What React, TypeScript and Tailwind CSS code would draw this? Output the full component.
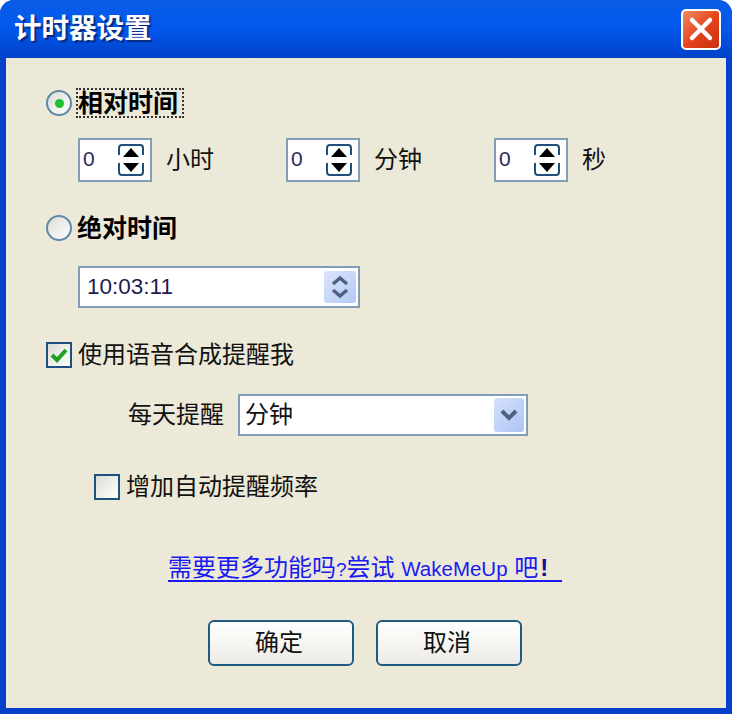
const cjk = "font-['Liberation_Sans','Noto_Sans_CJK_SC',sans-serif]";

function Radio({ checked }: { checked?: boolean }) {
  return (
    <span className="flex h-[26px] w-[26px] shrink-0 items-center justify-center rounded-full border-[2.5px] border-[#5d8aa8] bg-gradient-to-br from-[#dcdcd6] to-white">
      {checked && <span className="h-[9px] w-[9px] rounded-full bg-[#1fc22f]" />}
    </span>
  );
}

function Checkbox({ checked }: { checked?: boolean }) {
  return (
    <span className="flex h-[26px] w-[26px] shrink-0 items-center justify-center border-[2.5px] border-[#1c5180] bg-gradient-to-br from-[#dcdcd6] to-white">
      {checked && (
        <svg width="18" height="16" viewBox="0 0 18 16">
          <path d="M2 8 L7 13 L16 3" fill="none" stroke="#21a121" strokeWidth="4" />
        </svg>
      )}
    </span>
  );
}

function Spin({ label }: { label: string }) {
  return (
    <div className="flex w-[208px] items-center">
      <div className="flex h-[44px] w-[74px] items-center justify-between border-2 border-[#7f9db9] bg-white pl-[3px] pr-[5px]">
        <span className="pb-[3px] font-['Liberation_Sans',sans-serif] text-[21px] leading-none text-[#2b2b5a]">0</span>
        <svg width="28" height="34" viewBox="0 0 28 34">
          <path d="M2 12 V5 Q2 2 5 2 H23 Q26 2 26 5 V12" fill="none" stroke="#1f4f78" strokeWidth="2" />
          <path d="M2 20 V29 Q2 32 5 32 H23 Q26 32 26 29 V20" fill="none" stroke="#1f4f78" strokeWidth="2" />
          <path d="M14 5 L22 14 H6 Z" fill="#000" />
          <path d="M14 29 L22 20 H6 Z" fill="#000" />
        </svg>
      </div>
      <span className="ml-[14px] text-[24px] leading-none text-[#111]">{label}</span>
    </div>
  );
}

function XpButton({ label }: { label: string }) {
  return (
    <button className="h-[46px] w-[146px] rounded-[6px] border-[2.5px] border-[#1f5a80] bg-gradient-to-b from-white to-[#ecebe5] pr-[4px] text-[24px] leading-none text-[#111]">
      {label}
    </button>
  );
}

export default function App() {
  return (
    <div className={`${cjk} flex h-[714px] w-[732px] flex-col overflow-hidden rounded-t-[14px] bg-[#0440cc]`}>
      {/* title bar */}
      <div className="flex h-[58px] shrink-0 items-center justify-between bg-gradient-to-b from-[#0a5ee8] via-[#0256ec] to-[#0143c8] pl-[14px] pr-[11px]">
        <span className="text-[27.5px] font-bold leading-none text-white [text-shadow:2px_2px_1px_#0a2a80]">计时器设置</span>
        <span className="flex h-[41px] w-[40px] items-center justify-center rounded-[5px] border-2 border-white bg-gradient-to-br from-[#f08a60] via-[#e5441c] to-[#c8300c]">
          <svg width="26" height="26" viewBox="0 0 26 26">
            <path d="M4 4 L22 22 M22 4 L4 22" stroke="#fff" strokeWidth="4.5" strokeLinecap="round" />
          </svg>
        </span>
      </div>

      {/* body */}
      <div className="mx-[6px] mb-[6px] flex-1 bg-[#ece9d8] pl-[40px] pt-[30px]">
        <div className="flex h-[30px] items-center">
          <Radio checked />
          <span className="ml-[4px] border-2 border-dotted border-[#333] pr-[4px] text-[25px] font-bold leading-[26px] text-black">相对时间</span>
        </div>

        <div className="mt-[20px] flex pl-[32px]">
          <Spin label="小时" />
          <Spin label="分钟" />
          <Spin label="秒" />
        </div>

        <div className="mt-[33px] flex h-[26px] items-center">
          <Radio />
          <span className="ml-[5px] text-[25px] font-bold leading-none text-black">绝对时间</span>
        </div>

        <div className="ml-[32px] mt-[25px] flex h-[42px] w-[282px] items-center justify-between border-2 border-[#7f9db9] bg-white pl-[7px] pr-[2px]">
          <span className="text-[22.5px] leading-none text-[#1c1c50]">10:03:11</span>
          <span className="flex h-[32px] w-[32px] items-center justify-center rounded-[3px] bg-gradient-to-br from-[#dbe5fb] to-[#b4c9f5]">
            <svg width="20" height="26" viewBox="0 0 20 26">
              <path d="M3 10 L10 4 L17 10 M3 16 L10 22 L17 16" fill="none" stroke="#4d6185" strokeWidth="3.4" />
            </svg>
          </span>
        </div>

        <div className="mt-[34px] flex h-[26px] items-center">
          <Checkbox checked />
          <span className="ml-[6px] text-[24px] leading-none text-[#111]">使用语音合成提醒我</span>
        </div>

        <div className="ml-[82px] mt-[26px] flex h-[42px] items-center">
          <span className="text-[24px] leading-none text-[#111]">每天提醒</span>
          <div className="ml-[14px] flex h-[42px] w-[290px] items-center justify-between border-2 border-[#7f9db9] bg-white pl-[5px] pr-[2px]">
            <span className="text-[24px] leading-none text-[#111]">分钟</span>
            <span className="flex h-[34px] w-[30px] items-center justify-center rounded-[3px] bg-gradient-to-br from-[#d5e1fb] to-[#aec4f5]">
              <svg width="20" height="14" viewBox="0 0 20 14">
                <path d="M3 3 L10 10 L17 3" fill="none" stroke="#4d6185" strokeWidth="4" />
              </svg>
            </span>
          </div>
        </div>

        <div className="ml-[48px] mt-[38px] flex h-[26px] items-center">
          <Checkbox />
          <span className="ml-[6px] text-[24px] leading-none text-[#111]">增加自动提醒频率</span>
        </div>

        <div className="ml-[122px] mt-[54px] h-[28px] w-[394px] whitespace-pre border-b-2 border-[#1a1af0] pt-[1px] text-[24px] leading-[26px] text-[#1a1af0]">
          需要更多功能吗<span className="text-[19px]">?</span>尝试 <span className="text-[20.5px]">WakeMeUp</span> 吧<span className="ml-[2px] font-bold text-[#101090]">!</span>
        </div>

        <div className="ml-[162px] mt-[38px] flex gap-[22px]">
          <XpButton label="确定" />
          <XpButton label="取消" />
        </div>
      </div>
    </div>
  );
}
